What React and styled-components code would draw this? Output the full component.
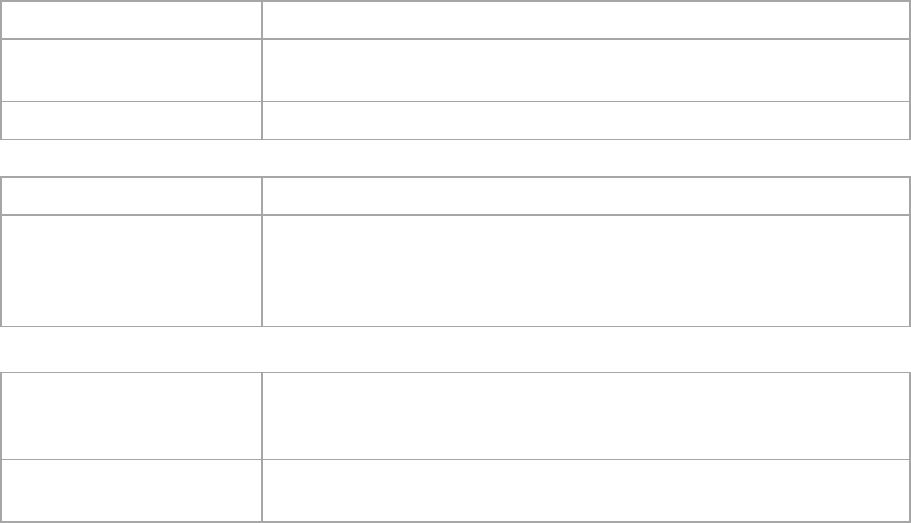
import React from "react";
import styled, { createGlobalStyle } from "styled-components";

const Global = createGlobalStyle`
  html, body { margin: 0; padding: 0; background: #ffffff; }
  body { font-family: "Liberation Sans", Arial, sans-serif; font-size: 14px; color: #222; }
`;

const LINE = "#a6a6a6";

const Page = styled.div`
  display: flex;
  flex-direction: column;
  width: 911px;
`;

const Table = styled.div`
  display: flex;
  flex-direction: column;
  border-left: 2px solid ${LINE};
  border-right: 2px solid ${LINE};
  border-top: ${(p) => p.$top}px solid ${LINE};
  margin-bottom: ${(p) => p.$gap || 0}px;
`;

const Row = styled.div`
  display: grid;
  grid-template-columns: 259px 1fr;
  height: ${(p) => p.$h}px;
  border-bottom: ${(p) => p.$bottom}px solid ${LINE};
`;

const Cell = styled.div`
  padding: 8px 10px;
  & + & {
    border-left: 2px solid ${LINE};
  }
`;

const tables = [
  { top: 2, gap: 36, rows: [[36, 2], [61, 1], [37, 1]] },
  { top: 2, gap: 45, rows: [[36, 2], [110, 1]] },
  { top: 1, gap: 0, rows: [[86, 1], [61, 2]] },
];

export default function App() {
  return (
    <>
      <Global />
      <Page>
        {tables.map((t, i) => (
          <Table key={i} $top={t.top} $gap={t.gap}>
            {t.rows.map(([h, b], j) => (
              <Row key={j} $h={h} $bottom={b}>
                <Cell />
                <Cell />
              </Row>
            ))}
          </Table>
        ))}
      </Page>
    </>
  );
}
